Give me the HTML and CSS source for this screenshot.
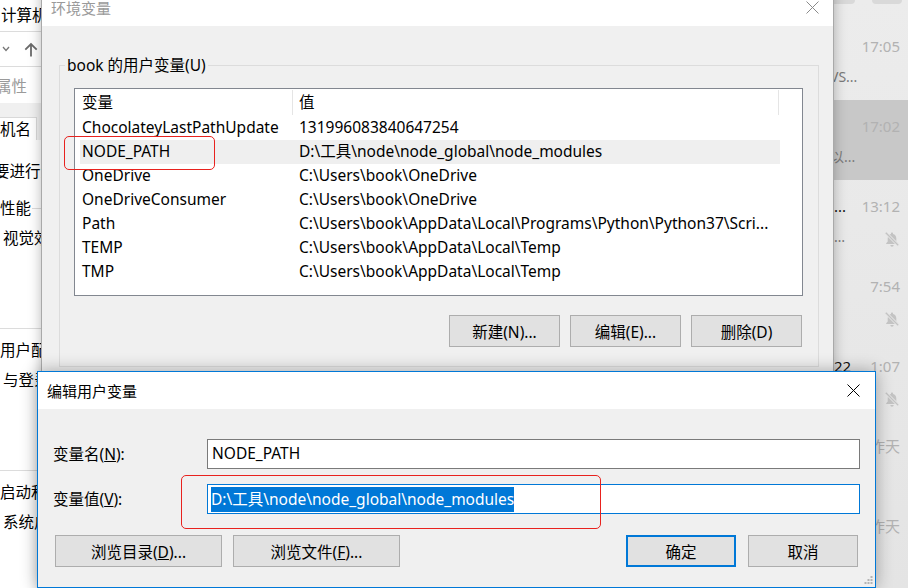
FILE: index.html
```html
<!DOCTYPE html>
<html lang="zh-CN">
<head>
    <meta charset="UTF-8" />
    <meta name="viewport" content="width=device-width, initial-scale=1.0"/>
    <title>环境变量</title>
    <link rel="stylesheet" href="styles.css">
</head>
<body>

<div class="desktop">

    <!-- system properties window, mostly hidden behind -->
    <div class="sys-panel">
        <div class="sys-title">计算机</div>
        <div class="sys-nav">
            <svg width="8" height="6" viewBox="0 0 8 6"><path d="M1 1l3 3.4L7 1" fill="none" stroke="#777" stroke-width="1.3"/></svg>
            <svg width="14" height="15" viewBox="0 0 14 15"><path d="M7 14.5V2M1.3 7.7L7 2l5.7 5.7" fill="none" stroke="#6a6a6a" stroke-width="1.8"/></svg>
        </div>
        <div class="sys-prop">系统属性</div>
        <div class="sys-band"></div>
        <div class="sys-tabs">
            <div class="sys-tab">计算机名</div>
        </div>
        <div class="sys-line sys-notice">要进行大多数更改，你必须作为管理员登录。</div>
        <div class="sys-line sys-group">性能</div>
        <div class="sys-line sys-sub">视觉效果，处理器计划</div>
        <div class="sys-rule"></div>
        <div class="sys-line sys-next">用户配置文件</div>
        <div class="sys-line sys-sub">与登录帐户相关的桌面设置</div>
        <div class="sys-rule"></div>
        <div class="sys-line sys-next">启动和故障恢复</div>
        <div class="sys-line sys-sub">系统启动、系统故障和调试信息</div>
    </div>

    <!-- chat list on the right -->
    <div class="chat-panel">
        <div class="chat-top"><span></span><span></span></div>

        <div class="chat-item">
            <div class="chat-line"><span class="chat-name"></span><span class="chat-time">17:05</span></div>
            <div class="chat-line"><span class="chat-preview cut">VS...</span></div>
        </div>
        <div class="chat-item selected">
            <div class="chat-line"><span class="chat-name"></span><span class="chat-time">17:02</span></div>
            <div class="chat-line"><span class="chat-preview cut">以...</span></div>
        </div>
        <div class="chat-item">
            <div class="chat-line"><span class="chat-name">...</span><span class="chat-time">13:12</span></div>
            <div class="chat-line"><span class="chat-preview">…</span><span class="mute-icon"></span></div>
        </div>
        <div class="chat-item">
            <div class="chat-line"><span class="chat-name"></span><span class="chat-time">7:54</span></div>
            <div class="chat-line"><span class="chat-preview"></span><span class="mute-icon"></span></div>
        </div>
        <div class="chat-item">
            <div class="chat-line"><span class="chat-name">22</span><span class="chat-time">1:07</span></div>
            <div class="chat-line"><span class="chat-preview"></span><span class="mute-icon"></span></div>
        </div>
        <div class="chat-item">
            <div class="chat-line"><span class="chat-name"></span><span class="chat-time">昨天</span></div>
        </div>
        <div class="chat-item">
            <div class="chat-line"><span class="chat-name"></span><span class="chat-time">昨天</span></div>
        </div>
    </div>

    <!-- 环境变量 -->
    <div class="window env-win">
        <div class="title-bar">
            <span class="title-text">环境变量</span>
            <svg class="close-icon" width="13" height="13" viewBox="0 0 13 13"><path d="M0.5 0.5l12 12M12.5 0.5l-12 12" stroke="#8a8a8a" stroke-width="1"/></svg>
        </div>
        <div class="win-body">
            <fieldset class="group-box">
                <legend>book 的用户变量(U)</legend>
                <div class="list-view">
                    <div class="list-head">
                        <div class="head-cell head-name">变量</div>
                        <div class="head-cell head-value">值</div>
                    </div>
                    <div class="list-row">
                        <div class="cell-name">ChocolateyLastPathUpdate</div>
                        <div class="cell-value">131996083840647254</div>
                    </div>
                    <div class="list-row current">
                        <div class="cell-name">NODE_PATH</div>
                        <div class="cell-value">D:\工具\node\node_global\node_modules</div>
                    </div>
                    <div class="list-row">
                        <div class="cell-name">OneDrive</div>
                        <div class="cell-value">C:\Users\book\OneDrive</div>
                    </div>
                    <div class="list-row">
                        <div class="cell-name">OneDriveConsumer</div>
                        <div class="cell-value">C:\Users\book\OneDrive</div>
                    </div>
                    <div class="list-row">
                        <div class="cell-name">Path</div>
                        <div class="cell-value">C:\Users\book\AppData\Local\Programs\Python\Python37\Scri...</div>
                    </div>
                    <div class="list-row">
                        <div class="cell-name">TEMP</div>
                        <div class="cell-value">C:\Users\book\AppData\Local\Temp</div>
                    </div>
                    <div class="list-row">
                        <div class="cell-name">TMP</div>
                        <div class="cell-value">C:\Users\book\AppData\Local\Temp</div>
                    </div>
                </div>
                <div class="btn-row">
                    <button class="btn">新建(N)...</button>
                    <button class="btn">编辑(E)...</button>
                    <button class="btn">删除(D)</button>
                </div>
            </fieldset>
        </div>
    </div>

    <!-- 编辑用户变量 -->
    <div class="window edit-win">
        <div class="title-bar">
            <span class="title-text">编辑用户变量</span>
            <svg class="close-icon" width="13" height="13" viewBox="0 0 13 13"><path d="M0.5 0.5l12 12M12.5 0.5l-12 12" stroke="#000" stroke-width="1"/></svg>
        </div>
        <div class="win-body edit-body">
            <div class="edit-form">
                <label class="field-label">变量名(<u>N</u>):</label>
                <div class="text-box">NODE_PATH</div>
                <label class="field-label">变量值(<u>V</u>):</label>
                <div class="text-box focused"><span class="selection">D:\工具\node\node_global\node_modules</span></div>
            </div>
            <div class="edit-buttons">
                <div class="btn-group">
                    <button class="btn btn-wide">浏览目录(<u>D</u>)...</button>
                    <button class="btn btn-wide">浏览文件(<u>F</u>)...</button>
                </div>
                <div class="btn-group btn-group-right">
                    <button class="btn btn-small btn-default">确定</button>
                    <button class="btn btn-small">取消</button>
                </div>
            </div>
        </div>
        <svg class="size-grip" width="10" height="10" viewBox="0 0 10 10" fill="#b4b4b4">
            <rect x="7.5" y="1" width="2" height="2"/>
            <rect x="4.5" y="4" width="2" height="2"/><rect x="7.5" y="4" width="2" height="2"/>
            <rect x="1.5" y="7" width="2" height="2"/><rect x="4.5" y="7" width="2" height="2"/><rect x="7.5" y="7" width="2" height="2"/>
        </svg>
    </div>

    <!-- red annotation boxes -->
    <div class="mark mark-name"></div>
    <div class="mark mark-value"></div>

</div>

</body>
</html>
```

FILE: styles.css
```css
body {
    margin: 0;
    font-family: "Noto Sans", "Noto Sans CJK SC", sans-serif;
    font-size: 15.5px;
    color: #000;
}

.desktop {
    position: relative;
    width: 908px;
    height: 588px;
    overflow: hidden;
    background: #fff;
}

/* ---------- background: system properties ---------- */

.sys-panel {
    position: absolute;
    left: 0;
    top: 0;
    width: 120px;
    height: 588px;
    background: #fff;
    white-space: nowrap;
    overflow: hidden;
}

.sys-title {
    height: 31px;
    line-height: 30px;
    padding-left: 1px;
    border-bottom: 1px solid #dcdcdc;
}

.sys-nav {
    height: 34px;
    display: flex;
    align-items: center;
    gap: 14px;
    padding-left: 2px;
    border-bottom: 1px solid #dcdcdc;
}

.sys-prop {
    height: 36px;
    line-height: 38px;
    color: #9a9a9a;
    text-indent: -35px;
}

.sys-band {
    height: 14px;
    background: #f0f0f0;
}

.sys-tabs {
    height: 23px;
    display: flex;
    background: #f0f0f0;
}

.sys-tab {
    width: 37px;
    height: 23px;
    line-height: 23px;
    background: #fff;
    border-top: 1px solid #d9d9d9;
    border-right: 1px solid #d9d9d9;
    text-indent: -31px;
    overflow: hidden;
    box-sizing: border-box;
}

.sys-line {
    height: 20px;
    line-height: 20px;
}

.sys-notice {
    margin-top: 21px;
    text-indent: -6px;
}

.sys-group {
    margin-top: 17px;
    display: flex;
    align-items: center;
    gap: 1px;
}

.sys-group::after {
    content: "";
    flex: 1;
    border-top: 1px solid #dcdcdc;
}

.sys-sub {
    margin-top: 10px;
    padding-left: 3px;
}

.sys-rule {
    height: 80px;
    border-bottom: 1px solid #dcdcdc;
}

.sys-next {
    margin-top: 11px;
}

/* ---------- background: chat list ---------- */

.chat-panel {
    position: absolute;
    left: 820px;
    top: 0;
    width: 88px;
    height: 588px;
    background: linear-gradient(#ececec, #e4e4e4);
    white-space: nowrap;
    font-size: 15px;
}

.chat-top {
    height: 20px;
    display: flex;
    gap: 17px;
}

.chat-top span {
    width: 35px;
    height: 4px;
    background: #d9d9d9;
    border-radius: 0 0 5px 5px;
}

.chat-top span + span {
    width: 30px;
}

.chat-item {
    height: 80px;
    padding: 16px 8px 0 14px;
    box-sizing: border-box;
}

.chat-item.selected {
    background: #c8c8c8;
}

.chat-line {
    height: 20px;
    line-height: 20px;
    display: flex;
    justify-content: space-between;
    align-items: center;
}

.chat-line + .chat-line {
    margin-top: 11px;
}

.chat-name {
    color: #111;
}

.chat-time {
    color: #b2b2b2;
}

.chat-preview {
    color: #7a7a7a;
    font-size: 14px;
}

.chat-preview.cut {
    text-indent: -4px;
}

.mute-icon {
    width: 16px;
    height: 16px;
    margin-top: 4px;
    background: url("data:image/svg+xml,%3Csvg xmlns='http://www.w3.org/2000/svg' viewBox='0 0 16 16'%3E%3Cpath d='M8 1.6c-.6 0-1 .4-1 1v.5C5 3.6 3.7 5.3 3.7 7.5v3.1L2.2 12.2v.9h11.6v-.9l-1.5-1.6V7.5c0-2.2-1.3-3.9-3.3-4.4v-.5c0-.6-.4-1-1-1zM6.3 14a1.7 1.7 0 0 0 3.4 0z' fill='%23c3c3c3'/%3E%3Cpath d='M1.5 1.5l13 13' stroke='%23e6e6e6' stroke-width='3'/%3E%3Cpath d='M1.8 1.8l12.4 12.4' stroke='%23c3c3c3' stroke-width='1.3'/%3E%3C/svg%3E") no-repeat center;
}

/* ---------- windows ---------- */

.window {
    position: absolute;
    box-sizing: border-box;
    background: #f0f0f0;
}

.env-win {
    left: 41px;
    top: -12px;
    width: 793px;
    height: 620px;
    border: 1px solid #a9a9a9;
    box-shadow: 0 0 12px rgba(0, 0, 0, 0.28);
}

.edit-win {
    left: 37px;
    top: 371px;
    width: 839px;
    height: 217px;
    border: 1px solid #0078d7;
    box-shadow: 0 0 16px rgba(0, 0, 0, 0.32);
}

.title-bar {
    height: 37px;
    background: #fff;
    display: flex;
    justify-content: space-between;
    align-items: center;
    padding: 0 14px 0 9px;
}

.title-text {
    font-size: 15px;
}

.env-win .title-text {
    color: #9a9a9a;
}

.edit-win .title-bar {
    padding-right: 15px;
}

.close-icon {
    display: block;
}

/* ---------- 环境变量 body ---------- */

.group-box {
    margin: 29px 14px 0 17px;
    padding: 13px 15px 19px 14px;
    border: 1px solid #dcdcdc;
}

.group-box legend {
    margin-left: -9px;
    padding: 0 2px;
    line-height: 20px;
}

.list-view {
    height: 208px;
    border: 1px solid #828790;
    background: #fff;
    box-sizing: border-box;
}

.list-head {
    display: flex;
    height: 27px;
}

.head-cell {
    margin: 1px 0;
    line-height: 25px;
    border-right: 1px solid #e5e5e5;
}

.head-name {
    width: 210px;
    padding-left: 7px;
}

.head-value {
    width: 479px;
    padding-left: 6px;
}

.list-row {
    display: flex;
    width: 700px;
    height: 24px;
    line-height: 22px;
    margin-left: 5px;
    white-space: nowrap;
}

.list-row.current {
    background: #efefef;
}

.cell-name {
    width: 210px;
    padding-left: 2px;
}

.cell-value {
    flex: 1;
    padding-left: 7px;
    overflow: hidden;
}

.btn-row {
    display: flex;
    justify-content: flex-end;
    gap: 10px;
    margin-top: 19px;
    margin-right: 1px;
}

.btn {
    height: 32px;
    width: 111px;
    padding: 0;
    font-family: inherit;
    font-size: 15.5px;
    color: #000;
    background: #e1e1e1;
    border: 1px solid #adadad;
    box-sizing: border-box;
}

/* ---------- 编辑用户变量 body ---------- */

.edit-body {
    height: 178px;
    padding: 30px 15px 0 15px;
    box-sizing: border-box;
}

.edit-form {
    display: grid;
    grid-template-columns: 154px 1fr;
    row-gap: 15px;
    align-items: center;
}

.field-label {
    line-height: 20px;
}

.text-box {
    height: 30px;
    line-height: 27px;
    padding: 0 4px;
    background: #fff;
    border: 1px solid #7a7a7a;
    box-sizing: border-box;
    white-space: nowrap;
}

.text-box.focused {
    border-color: #0078d7;
    padding-left: 3px;
}

.selection {
    display: inline-block;
    line-height: 25px;
    vertical-align: middle;
    background: #0078d7;
    color: #fff;
}

.edit-buttons {
    display: flex;
    justify-content: space-between;
    margin: 21px 2px 0 2px;
}

.btn-group {
    display: flex;
    gap: 11px;
}

.btn-group-right {
    gap: 12px;
}

.btn-wide {
    width: 167px;
}

.btn-small {
    width: 110px;
}

.btn-default {
    border: 2px solid #0078d7;
}

.size-grip {
    position: absolute;
    right: 2px;
    bottom: 2px;
}

/* ---------- red annotations ---------- */

.mark {
    position: absolute;
    border: 1px solid #e8221e;
    border-radius: 5px;
    pointer-events: none;
}

.mark-name {
    left: 64px;
    top: 136px;
    width: 149px;
    height: 32px;
}

.mark-value {
    left: 181px;
    top: 475px;
    width: 418px;
    height: 52px;
}
```
